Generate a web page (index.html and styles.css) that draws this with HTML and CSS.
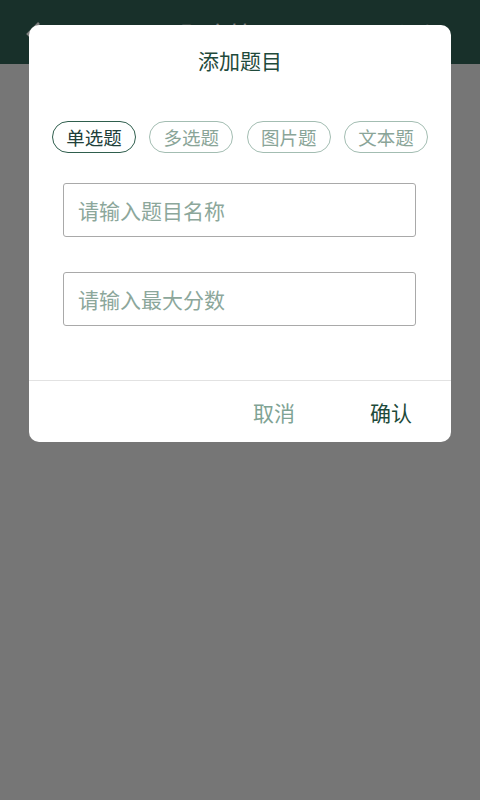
FILE: index.html
```html
<!DOCTYPE html>
<html lang="zh-CN">
<head>
<meta charset="utf-8">
<title>题库管理</title>
<link rel="stylesheet" href="styles.css">
</head>
<body>
<header class="appbar">
  <span class="back"><svg width="20" height="28" viewBox="0 0 20 28"><path d="M15 3 L4 14 L15 25" fill="none" stroke="#fff" stroke-width="2.6"/></svg></span>
  <span class="appbar-title">题库管理</span>
  <span class="appbar-action">添加</span>
</header>
<main class="page"></main>

<div class="overlay">
  <div class="dialog">
    <div class="dialog-title">添加题目</div>
    <div class="chips">
      <span class="chip chip-active">单选题</span>
      <span class="chip">多选题</span>
      <span class="chip">图片题</span>
      <span class="chip">文本题</span>
    </div>
    <div class="field">请输入题目名称</div>
    <div class="field field-second">请输入最大分数</div>
    <div class="actions">
      <span class="btn btn-cancel">取消</span>
      <span class="btn btn-ok">确认</span>
    </div>
  </div>
</div>
</body>
</html>
```

FILE: styles.css
```css
* { box-sizing: border-box; }
html, body { margin: 0; padding: 0; }
body {
  width: 480px;
  height: 800px;
  background: #ececec;
  font-family: "Noto Sans CJK SC", "Noto Sans", sans-serif;
  overflow: hidden;
}
.appbar {
  height: 64px;
  background: #306054;
  color: #ffffff;
  display: flex;
  align-items: center;
  padding: 4px 35px 0 24px;
}
.back { display: flex; width: 40px; }
.appbar-title {
  flex: 1;
  text-align: center;
  font-size: 25px;
  padding-right: 4px;
}
.appbar-action { font-size: 23px; }

.overlay {
  position: fixed;
  inset: 0;
  background: rgba(0, 0, 0, 0.5);
  display: flex;
  justify-content: center;
  align-items: flex-start;
  padding-top: 25px;
}
.dialog {
  width: 422px;
  background: #ffffff;
  border-radius: 10px;
  display: flex;
  flex-direction: column;
}
.dialog-title {
  margin-top: 20px;
  height: 30px;
  line-height: 30px;
  text-align: center;
  font-size: 21px;
  color: #1f4a3b;
}
.chips {
  margin-top: 46px;
  padding: 0 23px;
  display: flex;
  justify-content: space-between;
}
.chip {
  width: 84px;
  height: 32px;
  border: 1.5px solid #a3bdb2;
  border-radius: 16px;
  display: flex;
  align-items: center;
  justify-content: center;
  font-size: 18.5px;
  color: #8aa598;
}
.chip-active {
  border-color: #2f5e4d;
  color: #21403a;
}
.field {
  margin: 30px 35px 0 34px;
  height: 54px;
  border: 1px solid #a9a9a9;
  border-radius: 3px;
  padding-left: 14px;
  display: flex;
  align-items: center;
  font-size: 21px;
  color: #8ca79b;
}
.field-second { margin-top: 35px; }
.actions {
  margin-top: 54px;
  border-top: 1px solid #e2e2e2;
  height: 62px;
  display: flex;
  justify-content: flex-end;
  align-items: center;
  padding-right: 20px;
  gap: 37px;
}
.btn {
  width: 80px;
  text-align: center;
  font-size: 21px;
}
.btn-cancel { color: #7fa394; }
.btn-ok { color: #1d4a3a; }
```
